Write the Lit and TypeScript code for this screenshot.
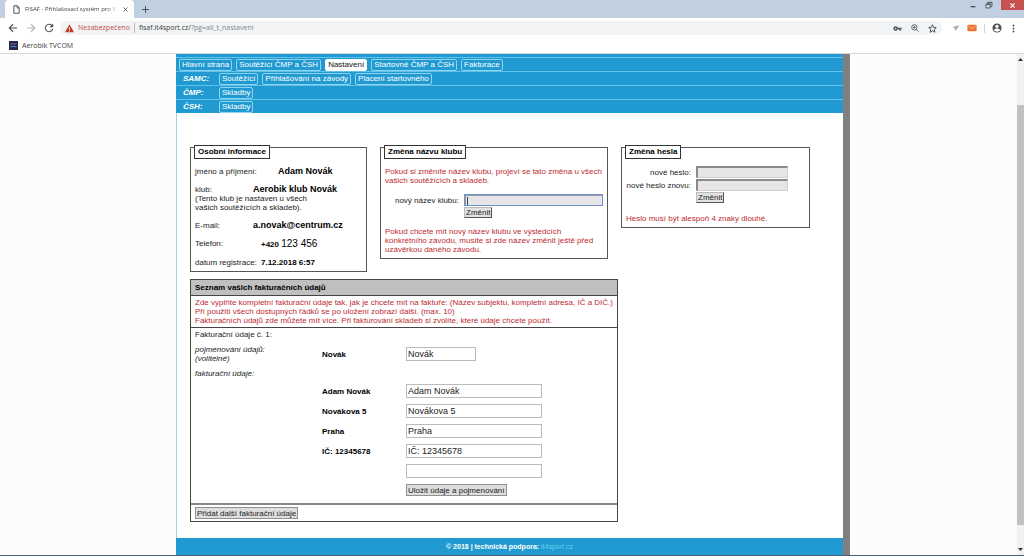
import { LitElement, html, css, svg } from "lit";
import { customElement } from "lit/decorators.js";
import { classMap } from "lit/directives/class-map.js";

const icon = (size: number, body: unknown, cls = "") =>
  html`<svg class=${cls} width=${size} height=${size} viewBox="0 0 24 24" aria-hidden="true">${body}</svg>`;

@customElement("browser-bar")
class BrowserBar extends LitElement {
  static styles = css`
    :host {
      display: block;
      font: 7px/10px "Open Sans", "Noto Sans", sans-serif;
      color: #3c4043;
      background: #fff;
      border-bottom: 1px solid #d4d5d6;
    }
    svg { display: block; flex: none; fill: none; stroke: #4d5156; stroke-width: 2.6; }
    .solid { fill: #4d5156; stroke: none; }
    .faded { stroke: #b4b7ba; }
    .strip { display: flex; height: 18px; background: #c0d0e0; }
    .tab {
      display: flex;
      align-items: center;
      gap: 4px;
      width: 129px;
      box-sizing: border-box;
      margin-left: 5px;
      padding: 0 5px 0 7px;
      background: #fff;
      border-radius: 4px 4px 0 0;
    }
    .title {
      flex: 1;
      white-space: nowrap;
      font-size: 6px;
      mask-image: linear-gradient(90deg, #000 88%, transparent);
    }
    .new { align-self: center; margin-left: 7px; }
    .window { display: flex; gap: 8px; margin-left: auto; height: 10px; align-items: center; }
    .close { display: flex; width: 23px; height: 10px; align-items: center; justify-content: center; background: #c75050; }
    .close svg { stroke: #fff; }
    .tools { display: flex; align-items: center; height: 20px; gap: 8px; padding: 0 6px 0 8px; }
    .address {
      display: flex;
      flex: 1;
      align-items: center;
      gap: 4px;
      height: 14px;
      margin-left: -2px;
      padding: 0 5px;
      border-radius: 7px;
      background: #f1f3f4;
    }
    .warn { color: #c5504a; border-right: 1px solid #b8bbbe; padding-right: 4px; }
    .url { flex: 1; }
    .path { color: #80868b; }
    .badges { display: flex; gap: 9px; align-items: center; }
    .sep { width: 1px; height: 9px; background: #d0d3d6; }
    .marks { display: flex; align-items: center; gap: 4px; height: 15px; padding-left: 9px; }
    .marks a { color: inherit; text-decoration: none; }
    .right { display: flex; align-items: center; gap: 7px; padding-left: 2px; }
  `;

  render() {
    return html`
      <div class="strip">
        <div class="tab">
          ${icon(9, svg`<path d="M5 2h9l5 5v15H5zM14 2v6h5"/>`)}
          <span class="title">FISAF - Přihlašovací systém pro S</span>
          ${icon(7, svg`<path d="M5 5l14 14M19 5L5 19"/>`)}
        </div>
        <span class="new">${icon(9, svg`<path d="M12 3v18M3 12h18"/>`)}</span>
        <div class="window">
          ${icon(8, svg`<path stroke-width="4" d="M5 17h14"/>`)}
          ${icon(8, svg`<path d="M3 9h13v12H3zM3 10h13M8 8V4h13v12h-4M8 5h13"/>`)}
          <span class="close">${icon(7, svg`<path stroke-width="4" d="M5 5l14 14M19 5L5 19"/>`)}</span>
        </div>
      </div>
      <div class="tools">
        ${icon(10, svg`<path d="M22 12H3M12 3l-9 9 9 9"/>`)}
        ${icon(10, svg`<path d="M2 12h19M12 3l9 9-9 9"/>`, "faded")}
        ${icon(10, svg`<path d="M19 6a9 9 0 1 0 2 8"/><path fill="#4d5156" stroke="none" d="M22 1v9h-9z"/>`)}
        <div class="address">
          ${icon(9, svg`<path fill="#c53929" stroke="none" d="M12 1l12 21H0z"/><path stroke="#fff" d="M12 9v6M12 17v3"/>`)}
          <span class="warn">Nezabezpečeno</span>
          <span class="url">fisaf.it4sport.cz/<span class="path">?pg=all_t_nastaveni</span></span>
          <span class="badges">
            ${icon(9, svg`<circle cx="7" cy="12" r="4" stroke-width="4"/><path stroke-width="4" d="M11 12h12M19 12v6"/>`)}
            ${icon(8, svg`<circle cx="10" cy="10" r="8"/><path d="M16 16l7 7M6 10h8M10 6v8"/>`)}
            ${icon(9, svg`<path d="M12 2l3 7 7 .6-5.400 4.800L18.300 22 12 18l-6.300 4 1.700-7.600L2 9.600 9 9z"/>`)}
          </span>
        </div>
        <span class="right">
          ${icon(8, svg`<path fill="#a9adb0" stroke="none" d="M2 9l20-5-11 17-2-7z"/>`)}
          ${icon(10, svg`<rect x="1" y="4" width="22" height="16" rx="2" fill="#ea7135" stroke="none"/><path stroke="#f7c6a8" stroke-width="2" d="M3 7l9 7 9-7"/>`)}
          <span class="sep"></span>
          ${icon(10, svg`<circle cx="12" cy="12" r="11" fill="#4d5156" stroke="none"/><circle cx="12" cy="8" r="4" fill="#fff" stroke="none"/><path fill="#fff" stroke="none" d="M4 17c3-5 13-5 16 0-4 5-12 5-16 0z"/>`)}
          ${icon(9, svg`<circle cx="12" cy="4" r="2.500"/><circle cx="12" cy="12" r="2.500"/><circle cx="12" cy="20" r="2.500"/>`, "solid")}
        </span>
      </div>
      <div class="marks">
        ${icon(9, svg`<rect width="24" height="24" fill="#23264d" stroke="none"/><path stroke="#8b6a9c" d="M4 8h16"/><path stroke="#5c9cc4" d="M4 15h16"/>`)}
        <a href="#">Aerobik TVCOM</a>
      </div>
    `;
  }
}

const menu = [
  { label: "", items: ["Hlavní strana", "Soutěžící ČMP a ČSH", "Nastavení", "Startovné ČMP a ČSH", "Fakturace"] },
  { label: "SAMC:", items: ["Soutěžící", "Přihlašování na závody", "Placení startovného"] },
  { label: "ČMP:", items: ["Skladby"] },
  { label: "ČSH:", items: ["Skladby"] },
];

const billing = ["Adam Novák", "Novákova 5", "Praha", "IČ: 12345678", ""];

@customElement("app-root")
class AppRoot extends LitElement {
  static styles = css`
    :host {
      display: flex;
      flex-direction: column;
      min-height: 100vh;
      box-sizing: border-box;
      font: 8px/9px "Liberation Sans", Arial, sans-serif;
      color: #222;
      background: #fcfcfc;
      border-bottom: 1px solid #4b5f70;
    }
    h2, p, dl, dd { margin: 0; font-size: inherit; }
    h2 { color: #000; }
    .view { flex: 1; display: flex; }
    .canvas { flex: 1; display: flex; justify-content: center; padding-left: 2px; }
    .page {
      display: flex;
      flex-direction: column;
      flex: 0 1 667px;
      background: #fff;
      box-shadow: inset 1px 0 #a5cfe2, 7px 0 #808080;
    }
    .scroll {
      display: flex;
      flex-direction: column;
      align-items: center;
      width: 7px;
      padding: 4px 0;
      box-sizing: border-box;
      background: #f1f1f1;
    }
    .scroll svg { display: block; }
    .before { flex: 43; }
    .thumb { flex: 419; width: 7px; background: #c1c1c1; }
    .after { flex: 22; }

    .menu { background: #209ad0; padding-top: 3px; }
    .row {
      display: flex;
      align-items: center;
      gap: 4px;
      height: 14px;
      box-sizing: border-box;
      padding-left: 3px;
      border-top: 1px solid #62c3ea;
    }
    .group { width: 32px; padding-left: 4px; font-weight: bold; font-style: italic; color: #fff; }
    .item {
      padding: 0 2px;
      border: 1px solid #8ed4f0;
      border-radius: 2px;
      color: #fff;
      text-decoration: none;
      line-height: 10px;
      white-space: nowrap;
    }
    .current { background: #fff; border-color: #fff; color: #111; }

    .content { flex: 1; padding: 34px 14px 16px; }
    .panels { display: flex; align-items: flex-start; gap: 13px; }
    .panel {
      display: flex;
      flex-direction: column;
      box-sizing: border-box;
      border: 1px solid #555;
      padding: 0 4px 4px;
    }
    .panel h2 {
      align-self: flex-start;
      margin: -3px 0 8px -1px;
      padding: 1px 3px;
      border: 1px solid #333;
      background: #fff;
      line-height: 10px;
    }
    .person { flex: 0 1 177px; }
    .club { flex: 0 1 228px; }
    .password { flex: 0 1 189px; }
    .red { color: #bd2a30; }
    .facts { display: grid; gap: 9px; }
    .fact { display: grid; grid-template-columns: 66px 1fr; }
    .wide { grid-template-columns: 83px 1fr; }
    .narrow { grid-template-columns: 58px 1fr; }
    dt { white-space: nowrap; }
    .strong { font-weight: bold; color: #000; white-space: nowrap; }
    .large { font-size: 9px; }
    .number { font-size: 10px; font-weight: normal; }
    .note { grid-column: 1 / -1; }

    .form { display: grid; grid-template-columns: 74px 1fr; column-gap: 5px; row-gap: 1px; align-items: center; }
    .club .form { margin: 9px 0; }
    .password h2 { margin-bottom: 7px; }
    .password .form { grid-template-columns: 65px 92px; margin-bottom: 11px; }
    .form label { text-align: right; white-space: nowrap; }
    input, button { font: inherit; box-sizing: border-box; margin: 0; color: #222; border-radius: 0; min-width: 0; }
    .grey {
      width: 100%;
      height: 12px;
      padding: 0 1px;
      border: 1px solid #d0d0d0;
      border-top: 2px solid #8a8a8a;
      border-left: 2px solid #8a8a8a;
      background: #e6e6e6;
    }
    .focus {
      border: 1px solid #6d92c4;
      box-shadow: inset 1px 1px #9a9aa6;
      background: linear-gradient(#444, #444) 2px 2px / 1px 8px no-repeat #e6e6ea;
    }
    .raised {
      grid-column: 2;
      justify-self: start;
      height: 11px;
      padding: 0 1px;
      border: 1px solid #bbb;
      border-right-color: #555;
      border-bottom-color: #555;
      background: #e2e2e2;
    }

    .billing { max-width: 428px; box-sizing: border-box; margin-top: 7px; border: 1px solid #444; }
    .billing h2 { padding: 3px 4px; background: #c0c0c0; border-bottom: 1px solid #444; }
    .help { padding: 2px 0 2px 4px; border-bottom: 1px solid #444; }
    .fields {
      display: grid;
      grid-template-columns: 127px 84px 1fr;
      row-gap: 6px;
      align-items: center;
      padding: 2px 4px 7px;
    }
    .full { grid-column: 1 / -1; }
    .fields label { font-weight: bold; color: #000; }
    .line { grid-column: 3; width: 136px; height: 14px; padding: 0 1px; border: 1px solid #bbb; background: #fff; font-size: 9px; }
    .short { width: 70px; }
    .value { grid-column: 2; }
    .flat { height: 12px; padding: 0 1px; border: 1px solid #909090; background: #dedede; }
    .save { grid-column: 3; justify-self: start; }
    .add { padding: 2px 4px; border-top: 2px solid #888; }
    .add .flat { display: block; }

    .footer { background: #209ad0; color: #fff; text-align: center; font-size: 7px; font-weight: bold; padding: 4px 0; }
    .footer a { color: #62cdf2; text-decoration: none; font-weight: normal; }
  `;

  render() {
    return html`
      <browser-bar></browser-bar>
      <div class="view">
        <div class="canvas">
          <main class="page">
            <nav class="menu">
              ${menu.map(
                (row) => html`<div class="row">
                  ${row.label ? html`<span class="group">${row.label}</span>` : ""}
                  ${row.items.map(
                    (t) => html`<a href="#" class=${classMap({ item: true, current: t === "Nastavení" })}>${t}</a>`
                  )}
                </div>`
              )}
            </nav>
            <div class="content">
              <div class="panels">
                <section class="panel person">
                  <h2>Osobní informace</h2>
                  <dl class="facts">
                    <div class="fact wide"><dt>jméno a příjmení:</dt><dd class="strong large">Adam Novák</dd></div>
                    <div class="fact narrow">
                      <dt>klub:</dt><dd class="strong large">Aerobik klub Novák</dd>
                      <dd class="note">(Tento klub je nastaven u všech<br />vašich soutěžících a skladeb).</dd>
                    </div>
                    <div class="fact narrow"><dt>E-mail:</dt><dd class="strong large">a.novak@centrum.cz</dd></div>
                    <div class="fact"><dt>Telefon:</dt><dd class="strong">+420 <span class="number">123 456</span></dd></div>
                    <div class="fact"><dt>datum registrace:</dt><dd class="strong">7.12.2018 6:57</dd></div>
                  </dl>
                </section>
                <section class="panel club">
                  <h2>Změna názvu klubu</h2>
                  <p class="red">Pokud si změníte název klubu, projeví se tato změna u všech vašich soutěžících a skladeb.</p>
                  <form class="form">
                    <label for="club">nový název klubu:</label>
                    <input id="club" class="grey focus" type="text" />
                    <button class="raised" type="button">Změnit</button>
                  </form>
                  <p class="red">Pokud chcete mít nový název klubu ve výsledcích konkrétního závodu, musíte si zde název změnit ještě před uzávěrkou daného závodu.</p>
                </section>
                <section class="panel password">
                  <h2>Změna hesla</h2>
                  <form class="form">
                    <label for="pass">nové heslo:</label>
                    <input id="pass" class="grey" type="password" />
                    <label for="again">nové heslo znovu:</label>
                    <input id="again" class="grey" type="password" />
                    <button class="raised" type="button">Změnit</button>
                  </form>
                  <p class="red">Heslo musí být alespoň 4 znaky dlouhé.</p>
                </section>
              </div>
              <section class="billing">
                <h2>Seznam vašich fakturačních údajů</h2>
                <p class="help red">
                  Zde vyplňte kompletní fakturační údaje tak, jak je chcete mít na faktuře: (Název subjektu, kompletní adresa, IČ a DIČ.)<br />
                  Při použití všech dostupných řádků se po uložení zobrazí další. (max. 10)<br />
                  Fakturačních údajů zde můžete mít více. Při fakturování skladeb si zvolíte, které údaje chcete použít.
                </p>
                <form class="fields">
                  <span class="full">Fakturační údaje č. 1:</span>
                  <i>pojmenování údajů:<br />(volitelné)</i>
                  <label for="name">Novák</label>
                  <input id="name" class="line short" type="text" .value=${"Novák"} />
                  <i class="full">fakturační údaje:</i>
                  ${billing.map(
                    (v, i) => html`
                      ${v ? html`<label class="value" for="line${i}">${v}</label>` : ""}
                      <input id="line${i}" class="line" type="text" aria-label=${v || "fakturační údaje"} .value=${v} />
                    `
                  )}
                  <button class="flat save" type="button">Uložit údaje a pojmenování</button>
                </form>
                <div class="add"><button class="flat" type="button">Přidat další fakturační údaje</button></div>
              </section>
            </div>
            <footer class="footer">© 2018 | technická podpora: <a href="#">it4sport.cz</a></footer>
          </main>
        </div>
        <div class="scroll">
          <svg width="5" height="4" viewBox="0 0 5 4"><path d="M0 3l2.500-3L5 3z" fill="#333" /></svg>
          <span class="before"></span>
          <span class="thumb"></span>
          <span class="after"></span>
          <svg width="5" height="4" viewBox="0 0 5 4"><path d="M0 1l2.500 3L5 1z" fill="#333" /></svg>
        </div>
      </div>
    `;
  }
}
